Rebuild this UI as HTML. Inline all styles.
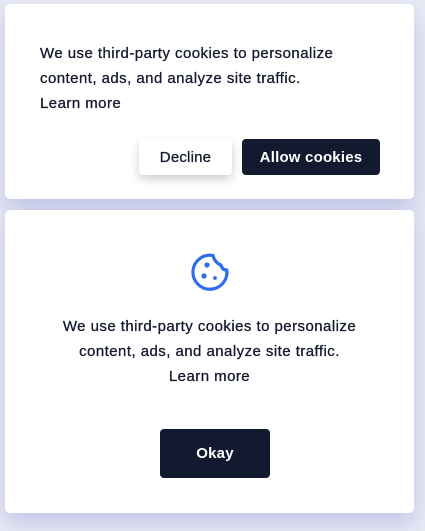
<!DOCTYPE html>
<html><head><style>
*{margin:0;padding:0;box-sizing:border-box}
body{width:425px;height:531px;background:#e9ebf5;font-family:"Liberation Sans",sans-serif;color:#141a2e;position:relative;overflow:hidden}
.card{position:absolute;left:5px;width:409px;background:#fff;border-radius:5px;box-shadow:0 10px 25px rgba(110,120,200,.35)}
.t{font-size:15px;line-height:25px;letter-spacing:0.45px;-webkit-text-stroke:0.3px #141a2e}
.btn{position:absolute;height:36px;border-radius:4px;font-size:15px;font-weight:bold;display:flex;align-items:center;justify-content:center;letter-spacing:0.2px}
.dark{background:#121a30;color:#fff}
</style></head><body>
<div class="card" style="top:4px;height:195px">
  <div class="t" style="position:absolute;left:35px;top:37px">We use third-party cookies to personalize<br>content, ads, and analyze site traffic.<br>Learn more</div>
  <div class="btn" style="left:134px;top:135px;width:93px;background:#fff;box-shadow:0 4px 10px rgba(0,0,0,.2);-webkit-text-stroke:0.3px #141a2e;font-weight:normal">Decline</div>
  <div class="btn dark" style="left:237px;top:135px;width:138px">Allow cookies</div>
</div>
<div class="card" style="top:210px;height:303px">
  <svg style="position:absolute;left:184px;top:41px" width="42" height="42" viewBox="0 0 42 42">
    <path d="M24 4.5 A17 17 0 1 0 37.8 19 Q33 19 32 14 Q26 12 24 4.5 Z" fill="none" stroke="#2f6bf0" stroke-width="3.2" stroke-linejoin="round"/>
    <circle cx="18" cy="14" r="2.6" fill="#2f6bf0"/><circle cx="15" cy="25" r="2.6" fill="#2f6bf0"/><circle cx="26" cy="27" r="1.9" fill="#2f6bf0"/>
  </svg>
  <div class="t" style="position:absolute;left:0;right:0;top:104px;text-align:center">We use third-party cookies to personalize<br>content, ads, and analyze site traffic.<br>Learn more</div>
  <div class="btn dark" style="left:155px;top:219px;width:110px;height:49px">Okay</div>
</div>
</body></html>
